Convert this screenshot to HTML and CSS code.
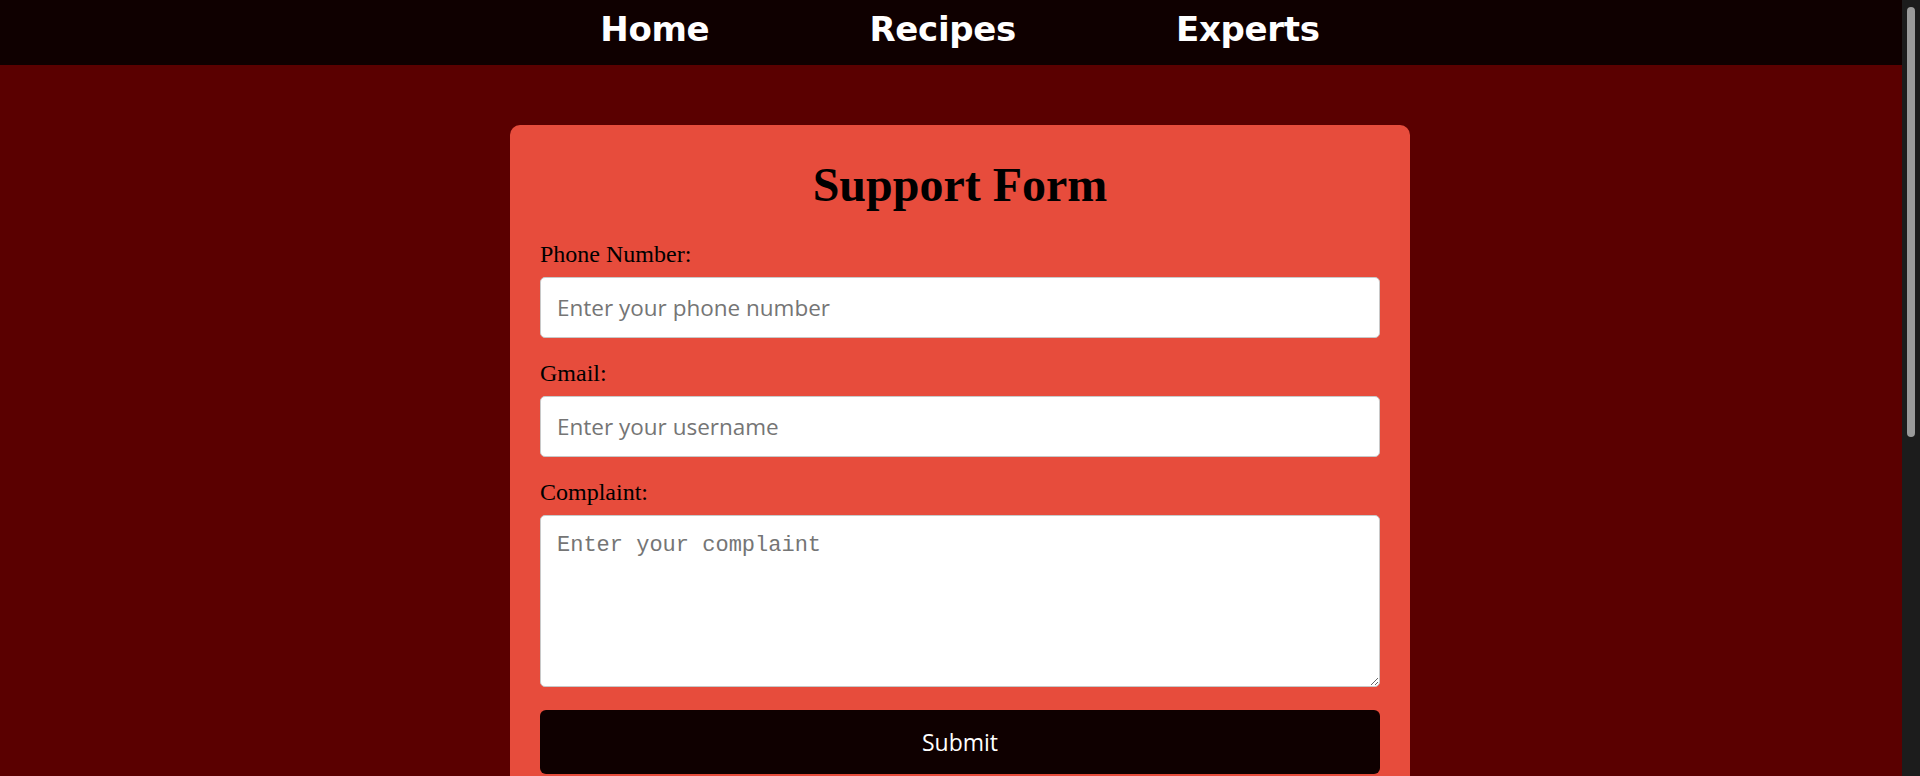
FILE: index.html
```html
<!DOCTYPE html>
<html lang="en">
<head>
<meta charset="utf-8">
<title>Support Form</title>
<link rel="stylesheet" href="styles.css">
</head>
<body>
<nav class="topnav">
  <a class="nav-link" href="#">Home</a>
  <a class="nav-link" href="#">Recipes</a>
  <a class="nav-link" href="#">Experts</a>
</nav>
<main class="page">
  <form class="card">
    <h1 class="card-title">Support Form</h1>
    <div class="field">
      <label class="field-label" for="phone">Phone Number:</label>
      <input class="field-input" id="phone" type="text" placeholder="Enter your phone number">
    </div>
    <div class="field">
      <label class="field-label" for="gmail">Gmail:</label>
      <input class="field-input" id="gmail" type="text" placeholder="Enter your username">
    </div>
    <div class="field">
      <label class="field-label" for="complaint">Complaint:</label>
      <textarea class="field-textarea" id="complaint" placeholder="Enter your complaint"></textarea>
    </div>
    <button class="submit-btn" type="button">Submit</button>
  </form>
</main>
<div class="fake-scrollbar" aria-hidden="true">
  <div class="fake-scrollbar-thumb"></div>
</div>
</body>
</html>
```
FILE: styles.css
```css
html {
  background: #5a0000;
}
body {
  margin: 0;
  background: #5a0000;
  overflow-x: hidden;
}
.topnav {
  width: 100vw;
  height: 65px;
  box-sizing: border-box;
  padding-top: 9px;
  background: #0f0000;
  display: flex;
  justify-content: center;
  align-items: flex-start;
  gap: 160px;
}
.nav-link {
  font-family: "DejaVu Sans", sans-serif;
  font-weight: 700;
  font-size: 34px;
  color: #ffffff;
  text-decoration: none;
  letter-spacing: -0.3px;
}
.page {
  width: 100vw;
  display: flex;
  justify-content: center;
  padding: 60px 0 580px;
}
.card {
  width: 900px;
  box-sizing: border-box;
  padding: 30px;
  background: #e74c3c;
  border-radius: 10px;
}
.card-title {
  margin: 2px 0 29px;
  text-align: center;
  font-family: "Liberation Serif", serif;
  font-weight: 700;
  font-size: 48px;
  color: #000;
}
.field {
  margin-bottom: 22px;
}
.field-label {
  display: block;
  margin-bottom: 9px;
  font-family: "Liberation Serif", serif;
  font-size: 24px;
  color: #000;
}
.field-input,
.field-textarea {
  display: block;
  width: 100%;
  box-sizing: border-box;
  border: 1px solid #c8c8c8;
  border-radius: 5px;
  background: #fff;
  color: #000;
}
.field-input {
  height: 61px;
  padding: 0 16px;
  font-family: "Open Sans", sans-serif;
  font-size: 22.5px;
}
.field-textarea {
  height: 172px;
  padding: 17px 16px;
  font-family: "Liberation Mono", monospace;
  font-size: 22px;
  resize: vertical;
}
.field-input::placeholder,
.field-textarea::placeholder {
  color: #757575;
}
.submit-btn {
  display: block;
  width: 100%;
  height: 64px;
  margin-top: 23px;
  border: none;
  border-radius: 6px;
  background: #0f0000;
  color: #fff;
  font-family: "Open Sans", sans-serif;
  font-size: 23px;
  cursor: pointer;
}
.fake-scrollbar {
  position: fixed;
  top: 0;
  right: 0;
  width: 18px;
  height: 100vh;
  background: #1c1c1c;
}
.fake-scrollbar-thumb {
  position: absolute;
  top: 7px;
  left: 5px;
  width: 8px;
  height: 430px;
  border-radius: 4px;
  background: #9a9a9a;
}
```
